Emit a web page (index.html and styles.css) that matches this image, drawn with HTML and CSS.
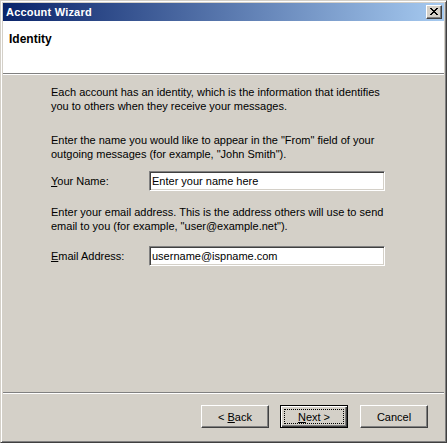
FILE: index.html
```html
<!DOCTYPE html>
<html lang="en">
<head>
    <meta charset="UTF-8">
    <title>Account Wizard</title>
    <link rel="stylesheet" href="styles.css">
</head>
<body>
    <div class="window">
        <div class="titlebar">
            <span class="title">Account Wizard</span>
            <button class="close" title="Close">
                <svg width="8" height="7" viewBox="0 0 8 7" shape-rendering="crispEdges">
                    <path fill="#000" d="M0 0h2v1H0z M6 0h2v1H6z M1 1h2v1H1z M5 1h2v1H5z M2 2h4v1H2z M3 3h2v1H3z M2 4h4v1H2z M1 5h2v1H1z M5 5h2v1H5z M0 6h2v1H0z M6 6h2v1H6z"/>
                </svg>
            </button>
        </div>

        <div class="header">
            <h1>Identity</h1>
        </div>

        <div class="content">
            <p class="intro">Each account has an identity, which is the information that identifies<br>you to others when they receive your messages.</p>

            <p class="name-info">Enter the name you would like to appear in the "From" field of your<br>outgoing messages (for example, "John Smith").</p>
            <div class="field name-field">
                <label for="fullname"><u>Y</u>our Name:</label>
                <input type="text" id="fullname" value="Enter your name here">
            </div>

            <p class="email-info">Enter your email address. This is the address others will use to send<br>email to you (for example, "user@example.net").</p>
            <div class="field email-field">
                <label for="email"><u>E</u>mail Address:</label>
                <input type="text" id="email" value="username@ispname.com">
            </div>
        </div>

        <div class="buttons">
            <button class="btn">&lt; <u>B</u>ack</button>
            <button class="btn default"><u>N</u>ext &gt;</button>
            <button class="btn cancel">Cancel</button>
        </div>
    </div>
</body>
</html>
```

FILE: styles.css
```css
html, body {
    margin: 0;
    padding: 0;
}
body {
    font-family: "Liberation Sans", Arial, sans-serif;
    font-size: 11px;
    color: #000;
    background-color: #d4d0c8;
}
.window {
    box-sizing: border-box;
    width: 447px;
    height: 443px;
    display: flex;
    flex-direction: column;
    background-color: #d4d0c8;
    border: 1px solid;
    border-color: #d4d0c8 #404040 #404040 #d4d0c8;
    box-shadow: inset 1px 1px #fff, inset -1px -1px #808080;
    padding: 2px;
}

/* title bar */
.titlebar {
    height: 18px;
    display: flex;
    align-items: center;
    justify-content: space-between;
    padding: 0 2px 0 3px;
    background: linear-gradient(to right, #0a246a, #a6caf0);
}
.title {
    color: #fff;
    font-weight: bold;
    font-size: 11px;
    letter-spacing: 0.2px;
    line-height: 18px;
}
.close {
    width: 16px;
    height: 14px;
    padding: 0 1px 1px 0;
    display: flex;
    align-items: center;
    justify-content: center;
    background-color: #d4d0c8;
    border: 1px solid;
    border-color: #fff #404040 #404040 #fff;
    box-shadow: inset -1px -1px #808080;
    box-sizing: border-box;
}

/* white header */
.header {
    height: 53px;
    background-color: #fff;
    border-bottom: 1px solid #808080;
    box-shadow: 0 1px #fff;
    padding: 12px 6px 0;
    box-sizing: border-box;
}
.header h1 {
    margin: 0;
    font-size: 12px;
    line-height: 13px;
    font-weight: bold;
}

/* page body */
.content {
    flex: 1;
    margin-top: 1px;
    padding: 10px 0 0 48px;
    border-bottom: 1px solid #808080;
}
.content p {
    margin: 0;
    line-height: 14px;
}
.content .name-info {
    margin-top: 20px;
}
.content .email-info {
    margin-top: 14px;
}
.field {
    display: flex;
    align-items: center;
    height: 20px;
}
.name-field {
    margin-top: 10px;
}
.email-field {
    margin-top: 13px;
}
.field label {
    width: 98px;
}
.field input {
    box-sizing: border-box;
    width: 236px;
    height: 20px;
    margin: 0;
    padding: 0 2px;
    font-family: inherit;
    font-size: 11px;
    color: #000;
    background-color: #fff;
    border: 1px solid;
    border-color: #808080 #fff #fff #808080;
    box-shadow: inset 1px 1px #404040, inset -1px -1px #d4d0c8;
    outline: none;
}

/* wizard buttons */
.buttons {
    height: 47px;
    border-top: 1px solid #fff;
    display: flex;
    justify-content: flex-end;
    align-items: flex-start;
    padding: 11px 16px 0 0;
    box-sizing: border-box;
}
.btn {
    width: 68px;
    height: 23px;
    margin: 0;
    padding: 0;
    font-family: inherit;
    font-size: 11px;
    color: #000;
    background-color: #d4d0c8;
    border: 1px solid;
    border-color: #fff #404040 #404040 #fff;
    box-shadow: inset -1px -1px #808080;
    box-sizing: border-box;
}
.btn.default {
    margin-left: 11px;
    border-color: #000;
    box-shadow: inset 1px 1px #fff, inset -1px -1px #404040, inset -2px -2px #808080;
    outline: 1px dotted #000;
    outline-offset: -5px;
}
.btn.cancel {
    margin-left: 12px;
}
```
